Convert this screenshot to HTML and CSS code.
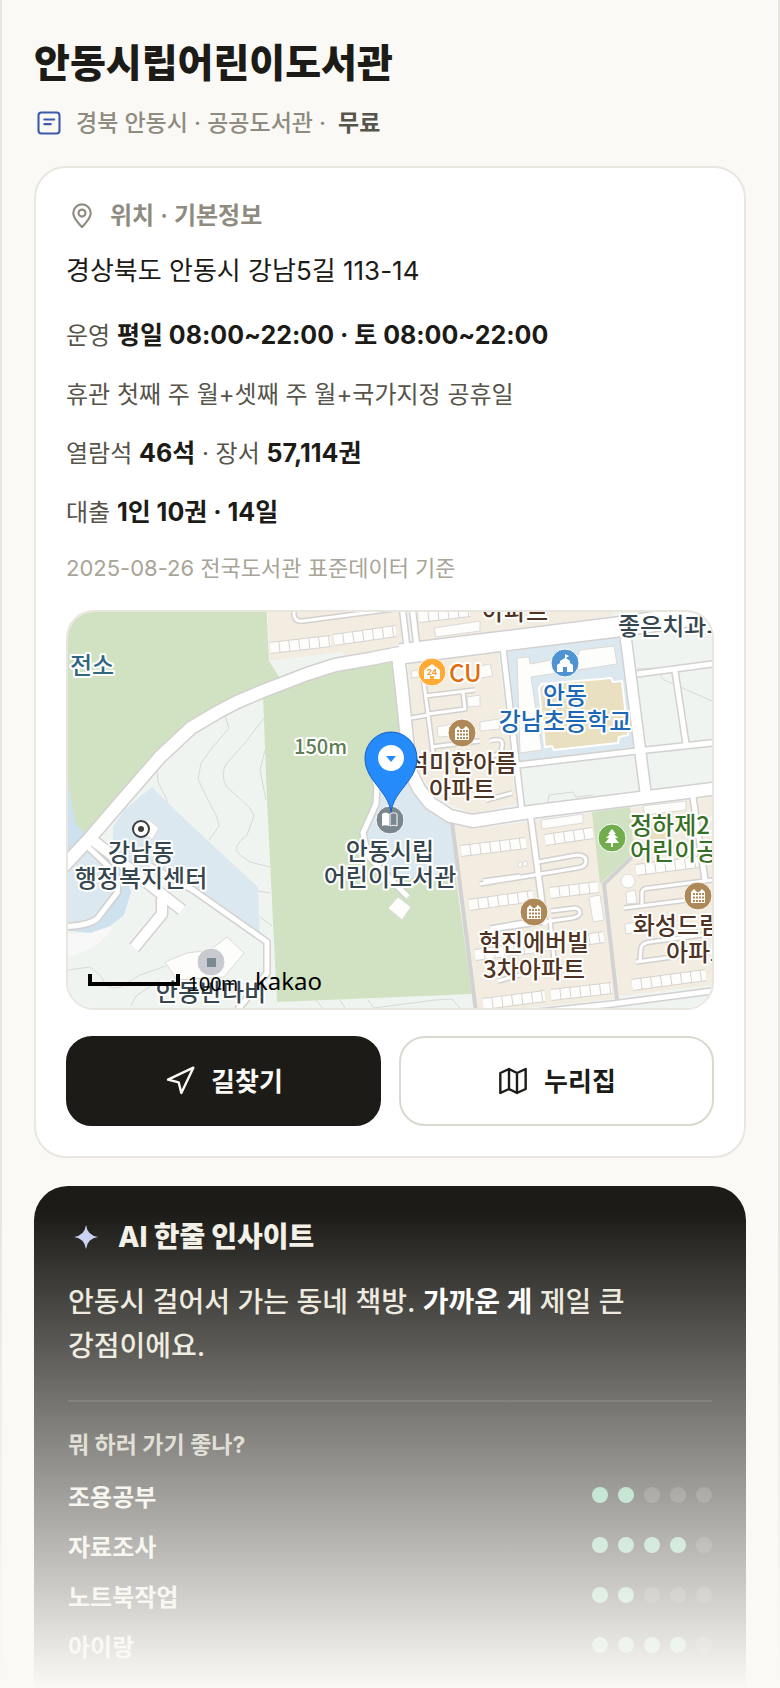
FILE: index.html
```html
<!DOCTYPE html>
<html lang="ko">
<head>
<meta charset="utf-8">
<meta name="viewport" content="width=device-width, initial-scale=1">
<title>안동시립어린이도서관</title>
<link rel="stylesheet" href="styles.css">
</head>
<body>
<div class="page">
  <header class="place">
    <h1 class="place-name">안동시립어린이도서관</h1>
    <p class="place-meta">
      <svg class="icon icon-blue" viewBox="0 0 24 24" aria-hidden="true"><rect x="3" y="3" width="18" height="18" rx="2.5"/><path d="M8 9h8.500M8 13h5.500"/></svg>
      <span>경북 안동시 · 공공도서관 ·</span>
      <strong>무료</strong>
    </p>
  </header>

  <main>
    <section class="card">
      <h2 class="card-title">
        <svg class="icon" viewBox="0 0 24 24" aria-hidden="true"><path d="M12 21.500C10 19 4.500 14.500 4.500 9.500a7.500 7.500 0 0 1 15 0c0 5-5.500 9.500-7.500 12z"/><circle cx="12" cy="9.500" r="3"/></svg>
        위치 · 기본정보
      </h2>
      <p class="address">경상북도 안동시 강남5길 113-14</p>
      <ul class="facts">
        <li>운영 <strong>평일 08:00~22:00 · 토 08:00~22:00</strong></li>
        <li>휴관 첫째 주 월+셋째 주 월+국가지정 공휴일</li>
        <li>열람석 <strong>46석</strong> · 장서 <strong>57,114권</strong></li>
        <li>대출 <strong>1인 10권 · 14일</strong></li>
      </ul>
      <p class="source">2025-08-26 전국도서관 표준데이터 기준</p>

      <div class="map">
        <svg viewBox="68 612 644 396" preserveAspectRatio="xMidYMid slice" role="img" aria-label="안동시립어린이도서관 지도">
          <defs>
            <path id="roads-wide" d="M400 654 480 644 617 627 720 612"/>
            <path id="roads-main" d="M60 870 90 838 120 803 160 757 191 728 218 712 237 702 263 691 307 674 335 665 370 659 405 652M398 655 402 690 407 740 411 773 419 789 430 803 450 816 473 821 530 812 640 798 720 788"/>
            <path id="roads-mid" d="M625 632 646 796M90 838 182 910M162 898V914L134 948"/>
            <path id="roads-small" d="M503 648 522 812M518 765 637 751 720 742M637 674 720 663M675 671 686 744M402 605 407 648M412 605 417 648M530 812 545 925M87 846 110 868Q120 882 117 893L97 919Q88 926 60 927M150 866 193 890 267 942V973L236 1012M372 770 377 786 376 804 363 833 368 856 408 897M692 790 705 880M520 1014 612 1004 720 990"/>
            <path id="roads-thin" d="M423 676 434 760M425 696 475 690M463 692 465 709 428 714M411 718 428 715M431 747 480 741M294 608V615Q295 622 303 621L402 608M538 862 577 855Q586 855 586 861 586 867 577 868L480 884M551 911 575 908Q580 909 580 913 579 917 572 918L490 930M492 756Q504 754 502 742 500 738 490 741M486 800 512 793M483 881 520 876M490 928 530 921M498 981 520 975M550 918 554 960M624 908 720 896M642 904V892Q643 888 650 888L720 879M636 962 680 956M640 960 641 948Q642 943 650 942L710 934"/>
            <path id="blocks" d="M270 648 331 641M334 640 396 631M419 617 470 611M461 851 526 843M545 840 593 833M469 905 533 896M550 893 598 887M475 955 545 946M570 942 604 937M483 1004 545 996M551 995 612 988M632 985 706 975M636 870 698 862"/>
            <path id="apt-glyph" d="M-7 7V-4l3-3 3 3h2l3-3 3 3V7z"/>
          </defs>

          <rect class="land" x="40" y="590" width="700" height="440"/>
          <path class="green" d="M60 600H266L269 661H281V686L218 712 160 757 80 848 72 820 68 780z"/>
          <path class="green" d="M263 695 335 668 396 662 410 780 382 788 364 833 372 862 455 872 472 994 277 1002 267 800z"/>
          <path class="water-deep" d="M60 770 68 780 72 805 76 824 88 836 60 870z"/>
          <path class="water-deep" d="M60 880 100 848 126 873 131 892 124 915 110 926 90 933 60 930z"/>
          <path class="civic" d="M60 870 90 850 117 885 112 904 95 920 60 926z"/>
          <path class="built" d="M60 934 92 933 114 926Q98 952 60 958z"/>
          <path class="civic" d="M152 787 175 810 258 887 260 936 193 888 127 862 113 843V827L124 810z"/>
          <path class="civic" d="M385 780 408 765 425 802 452 820 458 878H400L367 857 363 833z"/>
          <path class="civic" d="M505 652 616 637Q619 638 620 642L634 744Q634 748 630 749L519 764z"/>
          <path class="blocks-land" d="M267 600H401L406 642 370 653 270 661zM413 600 417 641 612 616V600zM408 664 498 653 518 803 473 814 440 800 415 770zM452 824 475 829 720 796V986L618 998 490 1012H476z"/>
          <path class="land" d="M618 996 720 984V992L618 1003zM269 661 343 652 343 656 281 680z"/>
          <path class="green" d="M592 812 630 807 634 852 600 884z"/>
          <path class="sand" d="M650 824 668 820 666 840 650 840z"/>

          <g class="contour">
            <path d="M225 716 229 728 212 748 201 763 198 779 206 796 217 817 219 826 209 840M264 718 245 743 227 763Q220 773 226 786L250 808 254 816 247 835Q230 848 240 855L250 862 270 867M265 750 260 770 266 800M157 769 158 782 168 802M68 970 90 967 100 975Q108 992 120 987L140 975 166 966M131 1006 136 996 160 980M258 891 270 893M260 917 272 926M316 1000 324 1010M340 1000 345 1008M368 1000 374 1008 435 1000 452 999 460 1008M637 669 655 668 664 680 712 701M548 802 549 795 573 792 576 797 593 795"/>
          </g>

          <g class="building">
            <path d="M517 658 529 657 530 664 578 655 580 650 614 646 617 664 531 677 542 750 520 753z"/>
            <path d="M434 628 480 621V631L436 637zM411 671 424 669 424 676 412 678zM437 727 452 724 453 736 438 737zM467 697 480 695V706L468 707zM480 666 490 664 493 676 480 678zM480 722 498 719 500 729 480 731zM541 820 583 814V823L542 829zM589 897 600 895 604 920 593 922zM626 892 635 890 637 903 627 904zM625 924 636 922V932L626 934zM643 806 686 801V810L645 815zM518 863 522 862V867H518zM523 862 527 861V866H523z"/>
            <path d="M165 962 187 953 210 950 227 937 244 953 224 977 177 980zM398 897 411 907 402 920 388 908zM148 819 159 828 152 840 140 830z"/>
            <circle cx="628" cy="881" r="7"/>
          </g>
          <path class="field" d="M539 688 542 684 600 679 611 678 613 682 622 681 628 735 619 737 618 743 554 750 552 746 545 747z"/>

          <use href="#blocks" class="block-edge"/>
          <use href="#blocks" class="block-fill"/>

          <path class="lane" d="M452 822 476 1012M634 855 604 884 617 1000"/>
          <g class="road-edge"><use href="#roads-thin" class="w-thin"/><use href="#roads-small" class="w-small"/><use href="#roads-mid" class="w-mid"/><use href="#roads-main" class="w-main"/><use href="#roads-wide" class="w-wide"/></g>
          <g class="road-fill"><use href="#roads-thin" class="w-thin"/><use href="#roads-small" class="w-small"/><use href="#roads-mid" class="w-mid"/><use href="#roads-main" class="w-main"/><use href="#roads-wide" class="w-wide"/></g>

          <g class="badges">
            <g transform="translate(432 672)"><circle class="b-store" r="14"/><path d="M-8 7V-2L0-8 8-2V7H2V4H-2V7z"/><text class="tiny" x="0" y="3">24</text></g>
            <g transform="translate(565 663)"><circle class="b-school" r="14"/><path d="M-8 9V2L-5 0V-2L0-5V-9L4-7 1-5 5-2V0L8 2V9H2V4H-2V9z"/></g>
            <g transform="translate(462 733)"><circle class="b-apt" r="14"/><use href="#apt-glyph"/><path class="windows" d="M-5-2H6M-5 1.500H6M-5 5H6"/></g>
            <g transform="translate(534 912)"><circle class="b-apt" r="14"/><use href="#apt-glyph"/><path class="windows" d="M-5-2H6M-5 1.500H6M-5 5H6"/></g>
            <g transform="translate(698 896)"><circle class="b-apt" r="14"/><use href="#apt-glyph"/><path class="windows" d="M-5-2H6M-5 1.500H6M-5 5H6"/></g>
            <g transform="translate(612 838)"><circle class="b-park" r="14"/><path d="M0-9 4-4H2L6 0H3L7 5H1V9H-1V5H-7L-3 0H-6L-2-4H-4z"/></g>
            <g transform="translate(390 820)"><circle class="b-library" r="14"/><path d="M-8-6C-5-8-2-7-1-6V6C-3 5-6 5-8 6z"/><path class="page-outline" d="M0-6C2-7 5-8 7-6V6C5 5 2 5 0 6z"/></g>
            <g transform="translate(211 962)"><circle class="b-plain" r="14"/><path class="stop" d="M-4-4H5V5H-4z"/></g>
            <g transform="translate(141 829)"><circle class="ring" r="8"/><circle class="ring-dot" r="3"/></g>
          </g>

          <g class="labels">
            <text class="teal" x="70" y="674">전소</text>
            <text class="elevation" x="294" y="754">150m</text>
            <text class="orange" x="449" y="682">CU</text>
            <text class="brown mid" x="515" y="620">아파트</text>
            <text class="slate" x="618" y="635">좋은치과의원</text>
            <text class="blue mid" x="565" y="704">안동<tspan x="565" dy="26">강남초등학교</tspan></text>
            <text class="brown mid" x="462" y="772">석미한아름<tspan x="462" dy="26">아파트</tspan></text>
            <text class="park" x="630" y="834">정하제21호<tspan x="630" dy="26">어린이공원</tspan></text>
            <text class="slate mid" x="390" y="860">안동시립<tspan x="390" dy="26">어린이도서관</tspan></text>
            <text class="slate mid" x="141" y="861">강남동<tspan x="141" dy="26">행정복지센터</tspan></text>
            <text class="brown mid" x="534" y="951">현진에버빌<tspan x="534" dy="27">3차아파트</tspan></text>
            <text class="brown mid" x="699" y="934">화성드림빌라<tspan x="699" dy="27">아파트</tspan></text>
            <text class="slate mid" x="211" y="1001">안동반다비</text>
          </g>

          <path class="scale-bar" d="M90 974V984H178V974"/>
          <text class="scale-text" x="188" y="991">100m</text>
          <text class="brand" x="255" y="990">kakao</text>

          <path class="pin" d="M391 812C388 790 365 781 365 758A26 26 0 0 1 417 758C417 781 394 790 391 812z"/>
          <circle class="pin-hole" cx="391" cy="758" r="13"/>
          <path class="pin-mark" d="M386 756H396L391 762z"/>
        </svg>
      </div>

      <div class="actions">
        <button type="button" class="btn btn-dark">
          <svg class="btn-icon" viewBox="0 0 24 24" aria-hidden="true"><path d="M3 11 22 2l-9 19-2-8z"/></svg>
          <span class="btn-label">길찾기</span>
        </button>
        <button type="button" class="btn btn-light">
          <svg class="btn-icon" viewBox="0 0 24 24" aria-hidden="true"><path d="M2.500 6 9 3l6 3 6.500-3v15L15 21l-6-3-6.500 3zM9 3v15M15 6v15"/></svg>
          <span class="btn-label">누리집</span>
        </button>
      </div>
    </section>

    <section class="insight">
      <h2 class="insight-title">
        <svg class="spark" viewBox="0 0 24 24" aria-hidden="true"><path d="M12 0Q13.500 10.500 24 12 13.500 13.500 12 24 10.500 13.500 0 12 10.500 10.500 12 0z"/><path d="M12 4 14.500 9.500 20 12 14.500 14.500 12 20 9.500 14.500 4 12 9.500 9.500z"/></svg>
        AI 한줄 인사이트
      </h2>
      <p class="insight-text">안동시 걸어서 가는 동네 책방. <strong>가까운 게</strong> 제일 큰 강점이에요.</p>
      <h3 class="insight-sub">뭐 하러 가기 좋나?</h3>
      <ul class="ratings">
        <li>조용공부 <span class="dots" role="img" aria-label="5점 중 2점"><i class="on"></i><i class="on"></i><i></i><i></i><i></i></span></li>
        <li>자료조사 <span class="dots" role="img" aria-label="5점 중 4점"><i class="on"></i><i class="on"></i><i class="on"></i><i class="on"></i><i></i></span></li>
        <li>노트북작업 <span class="dots" role="img" aria-label="5점 중 2점"><i class="on"></i><i class="on"></i><i></i><i></i><i></i></span></li>
        <li>아이랑 <span class="dots" role="img" aria-label="5점 중 4점"><i class="on"></i><i class="on"></i><i class="on"></i><i class="on"></i><i></i></span></li>
      </ul>
    </section>
  </main>
  <div class="fade"></div>
</div>
</body>
</html>
```
FILE: styles.css
```css
* { box-sizing: border-box; }
body, h1, h2, h3, p, ul { margin: 0; padding: 0; }
ul { list-style: none; }

body {
  background: #faf9f5;
  color: #1c1b17;
  font-family: Inter, "Noto Sans CJK KR", sans-serif;
  font-size: 24px;
  word-break: keep-all;
}

.page {
  position: relative;
  min-height: 100vh;
  padding: 39px 32px 0;
  border: solid #e8e6df;
  border-width: 0 2px;
}

.place-name { font-size: 39px; line-height: 48px; font-weight: 800; }
.place-meta {
  display: flex;
  align-items: center;
  gap: 12px;
  margin-top: 20px;
  font-size: 23px;
  line-height: 32px;
  font-weight: 500;
  color: #8f8b80;
}
.place-meta strong { font-weight: 600; color: #57544b; }

.icon {
  flex: none;
  width: 28px;
  height: 28px;
  margin: 0 1px;
  fill: none;
  stroke: currentColor;
  stroke-width: 1.8;
  stroke-linecap: round;
  stroke-linejoin: round;
}
.icon-blue { color: #3d5bab; }

.card {
  margin-top: 27px;
  padding: 32px 30px 30px;
  background: #fff;
  border: 2px solid #e8e6df;
  border-radius: 32px;
}
.card-title {
  display: flex;
  align-items: center;
  gap: 13px;
  padding-left: 1px;
  font-size: 24px;
  line-height: 32px;
  font-weight: 600;
  color: #8f8b80;
}
.address { margin-top: 19px; font-size: 26px; line-height: 40px; }
.facts { display: grid; gap: 19px; margin-top: 25px; line-height: 40px; color: #57544b; }
.facts strong { font-size: 25px; line-height: 1; font-weight: 700; color: #1c1b17; }
.source { margin-top: 19px; font-size: 22px; line-height: 32px; color: #a8a498; }

.actions { display: grid; grid-template-columns: 1fr 1fr; gap: 18px; margin-top: 26px; }
.btn {
  display: flex;
  align-items: center;
  justify-content: center;
  gap: 15px;
  height: 90px;
  border: 2px solid #1c1b17;
  border-radius: 26px;
  font: inherit;
  font-size: 26px;
  font-weight: 700;
}
.btn-label { padding-bottom: 4px; }
.btn-dark { background: #1c1b17; color: #faf9f5; }
.btn-light { background: #fff; color: #1c1b17; border-color: #dbd9cf; }
.btn-icon {
  width: 32px;
  height: 32px;
  fill: none;
  stroke: currentColor;
  stroke-width: 1.8;
  stroke-linecap: round;
  stroke-linejoin: round;
}

.insight {
  margin-top: 28px;
  padding: 31px 34px 18px;
  background: #1c1b17;
  border-radius: 34px 34px 0 0;
  color: #f3f0e7;
}
.insight-title {
  display: flex;
  align-items: center;
  gap: 20px;
  padding-left: 6px;
  font-size: 28px;
  line-height: 40px;
  font-weight: 800;
}
.spark { width: 24px; height: 24px; fill: #c8d2f2; }
.insight-text {
  margin-top: 23px;
  padding-bottom: 32px;
  border-bottom: 2px solid #34332f;
  font-size: 28px;
  line-height: 44px;
  font-weight: 500;
  color: #ebe7db;
}
.insight-text strong { font-weight: 700; color: #fff; }
.insight-sub { margin-top: 27px; font-size: 23px; line-height: 32px; font-weight: 700; color: #c9c5b8; }
.ratings { margin-top: 9px; font-weight: 600; }
.ratings li { display: flex; align-items: center; justify-content: space-between; height: 50px; }
.dots { display: flex; gap: 10px; }
.dots i { width: 16px; height: 16px; border-radius: 50%; background: #3e3d39; }
.dots .on { background: #7cc9a4; }

.fade {
  position: absolute;
  left: -2px;
  right: -2px;
  bottom: 0;
  height: 476px;
  background: linear-gradient(to bottom, rgba(250, 249, 245, 0), #faf9f5);
  pointer-events: none;
}

/* Map */
.map {
  height: 400px;
  margin-top: 26px;
  border: 2px solid #e8e6df;
  border-radius: 28px;
  overflow: hidden;
}
.map svg { display: block; width: 100%; height: 100%; }
.land { fill: #eff4f1; }
.green { fill: #d1e2c2; }
.water-deep { fill: #cee1ef; }
.civic { fill: #dce8f0; }
.built { fill: #f8f8f8; }
.blocks-land { fill: #f3ece1; }
.sand { fill: #eadfc0; }
.field { fill: #e9dfc1; stroke: #fff; stroke-width: 2; }
.contour { fill: none; stroke: #d6dad5; stroke-width: 1; }
.building { fill: #fdfdfc; stroke: #dcdad6; stroke-width: 1; }
.block-edge { fill: none; stroke: #d6d4d0; stroke-width: 12; }
.block-fill { fill: none; stroke: #fdfdfc; stroke-width: 10; stroke-dasharray: 9 1; }
.lane { fill: none; stroke: #d2d2d2; stroke-width: 4; }
.road-edge, .road-fill { fill: none; stroke-linejoin: round; }
.road-edge { stroke: #d2d1d0; }
.road-fill { stroke: #fff; }
.road-edge .w-wide { stroke-width: 22; }
.road-edge .w-main { stroke-width: 15; }
.road-edge .w-mid { stroke-width: 13; }
.road-edge .w-small { stroke-width: 8; }
.road-edge .w-thin { stroke-width: 6; }
.road-fill .w-wide { stroke-width: 19; }
.road-fill .w-main { stroke-width: 12; }
.road-fill .w-mid { stroke-width: 10; }
.road-fill .w-small { stroke-width: 5; }
.road-fill .w-thin { stroke-width: 3; }

.badges { fill: #fff; }
.badges circle { stroke: #fff; stroke-width: 1; }
.badges .b-store { fill: #ffab35; }
.badges .b-school { fill: #4f93d0; }
.badges .b-apt { fill: #ae8856; }
.badges .b-park { fill: #71ad4c; }
.badges .b-library { fill: #7a878e; }
.badges .b-plain { fill: #c9cacf; }
.badges .stop { fill: #7b8990; }
.badges .windows { fill: none; stroke: #ae8856; stroke-width: 2; stroke-dasharray: 2 1; }
.badges .page-outline { fill: none; stroke: #fff; stroke-width: 1; }
.badges .ring { fill: #fff; stroke: #3d3d3d; stroke-width: 2; }
.badges .ring-dot { fill: #3d3d3d; stroke: none; }
.tiny { fill: #f19a20; font-size: 8px; font-weight: 700; text-anchor: middle; }

.labels {
  font-family: "Noto Sans CJK KR", sans-serif;
  font-size: 24px;
  font-weight: 500;
  stroke: #fff;
  stroke-width: 4;
  stroke-linejoin: round;
  paint-order: stroke;
}
.labels .mid { text-anchor: middle; }
.labels .teal { fill: #2f6680; }
.labels .slate { fill: #36464f; }
.labels .brown { fill: #4f3424; }
.labels .blue { fill: #1c68b5; }
.labels .park { fill: #397027; }
.labels .orange { fill: #e06c0c; }
.labels .elevation { fill: #5f7d53; font-size: 20px; }

.scale-bar { fill: none; stroke: #000; stroke-width: 4; }
.scale-text { font: 20px "Liberation Sans", sans-serif; }
.brand { font: 24px "Noto Sans", sans-serif; }

.pin { fill: #258bfb; stroke: #1660c4; stroke-width: 1; }
.pin-hole { fill: #fff; }
.pin-mark { fill: #258bfb; }
```
